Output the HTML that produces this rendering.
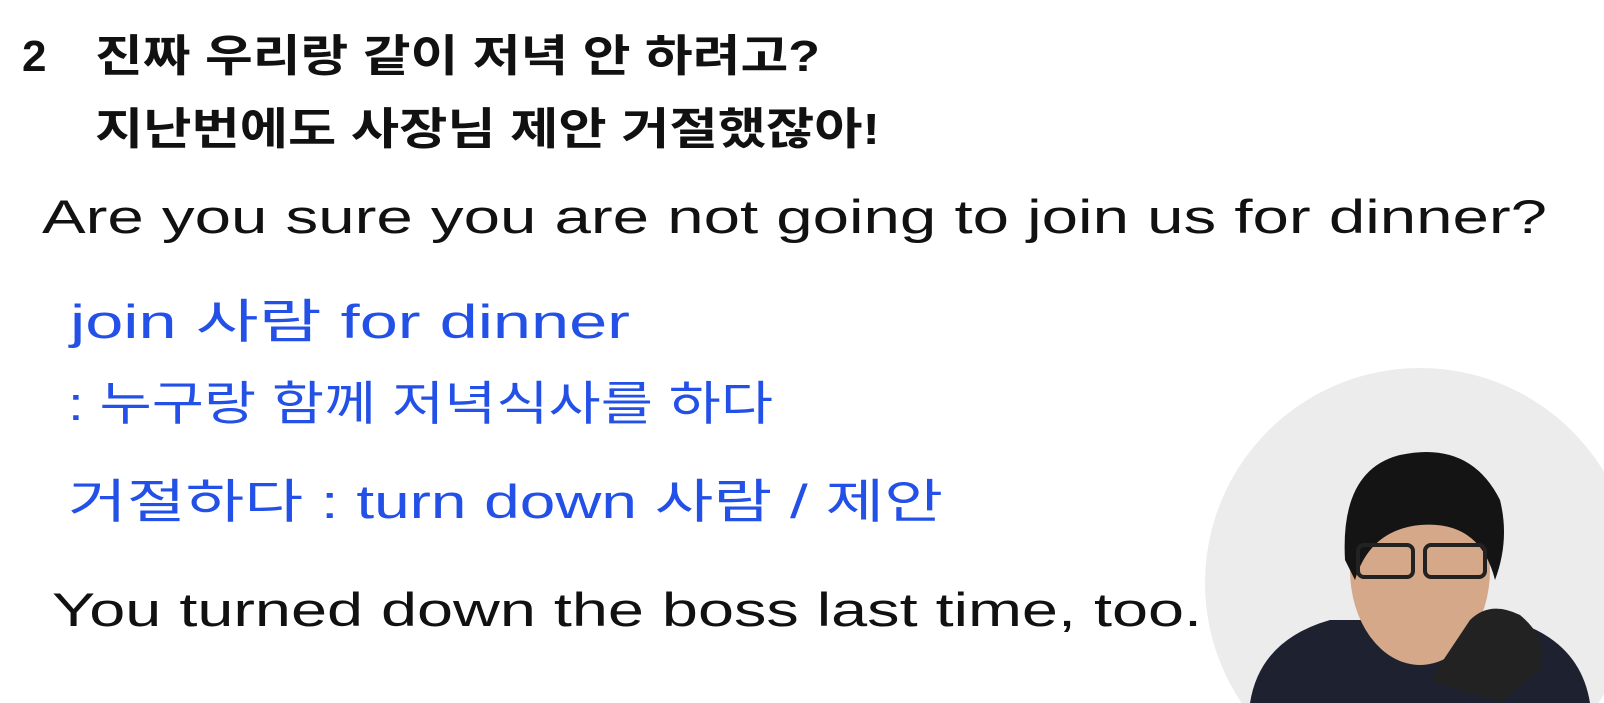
<!DOCTYPE html>
<html><head><meta charset="utf-8"><style>
html,body{margin:0;padding:0;background:#fff;width:1604px;height:703px;overflow:hidden}
svg{display:block}
.k{font-family:"Liberation Sans","Noto Sans CJK KR",sans-serif;font-weight:bold;font-size:44px;fill:#111}
.h{font-family:"Liberation Sans","Noto Sans CJK KR",sans-serif;font-size:47px;fill:#111}
.b{fill:#2350e6}
</style></head><body>
<svg width="1604" height="703" viewBox="0 0 1604 703">
<defs>
<clipPath id="c"><circle cx="1420" cy="583" r="215"/></clipPath>
<clipPath id="v"><rect width="1604" height="703"/></clipPath>
</defs>
<rect width="1604" height="703" fill="#fff"/>
<text class="k" x="22" y="71">2</text>
<text class="k" x="95" y="71" textLength="725" lengthAdjust="spacingAndGlyphs">진짜 우리랑 같이 저녁 안 하려고?</text>
<text class="k" x="95" y="144" textLength="785" lengthAdjust="spacingAndGlyphs">지난번에도 사장님 제안 거절했잖아!</text>
<text class="h" x="42" y="233" textLength="1505" lengthAdjust="spacingAndGlyphs">Are you sure you are not going to join us for dinner?</text>
<text class="h b" x="70" y="338" textLength="560" lengthAdjust="spacingAndGlyphs">join 사람 for dinner</text>
<text class="h b" x="68" y="420" textLength="705" lengthAdjust="spacingAndGlyphs">: 누구랑 함께 저녁식사를 하다</text>
<text class="h b" x="68" y="518" textLength="875" lengthAdjust="spacingAndGlyphs">거절하다 : turn down 사람 / 제안</text>
<text class="h" x="52" y="626" textLength="1150" lengthAdjust="spacingAndGlyphs">You turned down the boss last time, too.</text>
<g clip-path="url(#v)">
<circle cx="1420" cy="583" r="215" fill="#ececec"/>
<g clip-path="url(#c)">
<path d="M1250 703 Q1260 640 1330 620 L1510 620 Q1580 640 1590 703 Z" fill="#1e2230"/>
<ellipse cx="1420" cy="570" rx="70" ry="95" fill="#d6a88a"/>
<path d="M1345 560 Q1340 470 1400 455 Q1470 440 1500 500 Q1510 540 1495 580 Q1480 520 1420 525 Q1370 530 1355 580 Z" fill="#141414"/>
<rect x="1358" y="545" width="55" height="32" rx="6" fill="none" stroke="#222" stroke-width="4"/>
<rect x="1425" y="545" width="60" height="32" rx="6" fill="none" stroke="#222" stroke-width="4"/>
<path d="M1430 680 L1470 620 Q1490 600 1520 615 Q1550 640 1540 670 L1500 703 Z" fill="#222"/>
</g>
</g>
</svg>
</body></html>
